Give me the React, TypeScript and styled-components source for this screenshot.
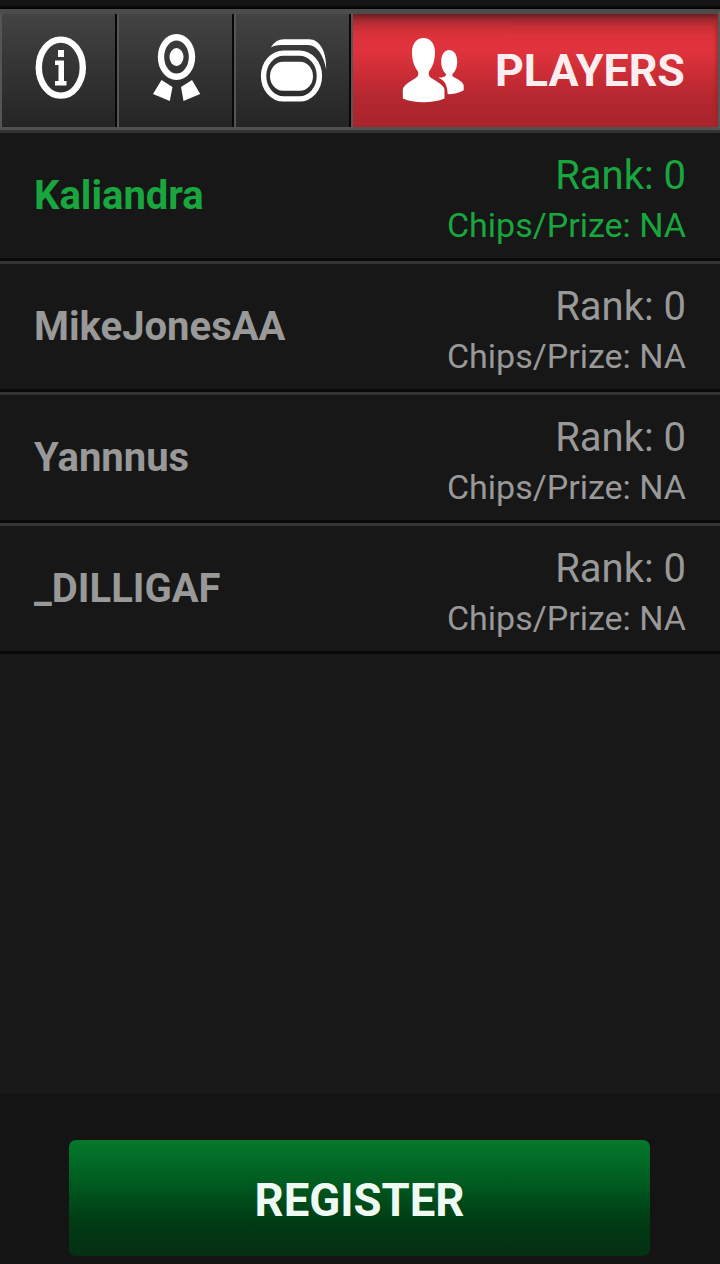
import React from "react";
import styled, { createGlobalStyle } from "styled-components";

const GlobalStyle = createGlobalStyle`
  *, *::before, *::after { box-sizing: border-box; }
  body {
    margin: 0;
    background: #191919;
    font-family: Roboto, "Liberation Sans", sans-serif;
  }
`;

const Screen = styled.main`
  display: flex;
  flex-direction: column;
  width: 720px;
  height: 1264px;
  overflow: hidden;
  background: #191919;
`;

const TopStrip = styled.div`
  flex: none;
  height: 9px;
  background: linear-gradient(#151515 0 5px, #030303 8px);
`;

const TabBar = styled.nav`
  flex: none;
  display: flex;
  height: 121px;
  border-top: 5px solid #4d4b4b;
  border-bottom: 3px solid #525050;
  border-right: 2px solid #595656;
`;

const Tab = styled.button<{ $active?: boolean }>`
  flex: ${(p) => (p.$active ? "1" : "0 0 117px")};
  display: flex;
  align-items: flex-start;
  height: 113px;
  margin: 0;
  padding: 0;
  border: 0 solid #070707;
  border-right-width: ${(p) => (p.$active ? 0 : 2)}px;
  box-shadow: ${(p) => (p.$active ? "inset 2px 0 #5b5555, inset -4px 0 4px -3px #8d242a" : "inset 2px 0 #555")};
  background: ${(p) =>
    p.$active
      ? "linear-gradient(#681d21 0, #a3282e 6px, #c92e36 13px, #dc323b 22px, #e1333d 36px, #cd2d36 58px, #b4272f 84px, #a8242c 100%)"
      : "linear-gradient(#434343, #353535 45%, #252525)"};
  color: #ffeef0;
  font: inherit;
`;

const TabIcon = styled.svg`
  flex: none;
  display: block;
  width: 115px;
  height: 113px;
  fill: #fff;
`;

const TabLabel = styled.span`
  margin-left: 29px;
  font-size: 44.8px;
  font-weight: 700;
  line-height: 52px;
  padding-top: 31px;
`;

const List = styled.ul`
  flex: 1;
  margin: 0;
  padding: 0;
  list-style: none;
`;

const Row = styled.li<{ $self?: boolean }>`
  display: flex;
  justify-content: space-between;
  height: 131px;
  padding: 0 34px;
  border-top: 3px solid #333;
  border-bottom: 3px solid #090909;
  background: #171717;
  color: ${(p) => (p.$self ? "#19a63f" : "#999")};
`;

const Name = styled.span`
  padding-top: 39px;
  font-size: 40px;
  font-weight: 700;
  line-height: 48px;
`;

const Stats = styled.div`
  display: flex;
  flex-direction: column;
  align-items: flex-end;
  padding-top: 19px;
`;

const Rank = styled.span`
  font-size: 40px;
  line-height: 48px;
`;

const Prize = styled.span`
  padding-top: 5px;
  font-size: 34px;
  line-height: 40px;
`;

const Footer = styled.footer`
  flex: none;
  display: flex;
  justify-content: center;
  height: 170px;
  padding: 46px 70px 0 69px;
  background: #141414;
`;

const RegisterButton = styled.button`
  width: 581px;
  height: 116px;
  padding: 6px 0 0;
  border: 0;
  border-radius: 7px;
  background: linear-gradient(#0a772b 0, #027329 9px, #005b20 43px, #003c14 80px, #052f13 100%);
  color: #effbf2;
  font: 700 45.5px/52px Roboto, "Liberation Sans", sans-serif;
`;

const InfoIcon = () => (
  <TabIcon viewBox="0 14 115 113">
    <ellipse cx="60.8" cy="67.6" rx="22" ry="28" fill="none" stroke="#fff" strokeWidth="6.4" />
    <path d="M58 50h6v7h-6zM55 60.5h9V81h2.5v4.5H55V81h3.5V65H55z" />
  </TabIcon>
);

const MedalIcon = () => (
  <TabIcon viewBox="117 14 115 113">
    <ellipse cx="176.5" cy="57" rx="15.5" ry="19.8" fill="none" stroke="#fff" strokeWidth="6.4" />
    <ellipse cx="176.5" cy="57" rx="7" ry="9" />
    <path d="M161.5 80l11 7-2.700 14-16.800-7zM192 80l-11 7 2.500 14 16.700-7z" />
  </TabIcon>
);

const TablesIcon = () => (
  <TabIcon viewBox="234 14 115 113">
    <rect x="270" y="61.8" width="43" height="29" rx="13" ry="14.5" />
    <rect x="263.6" y="53.1" width="55.8" height="45.8" rx="20" ry="22.9" fill="none" stroke="#fff" strokeWidth="5.4" />
    <path d="M270.800 47.500Q275.500 39.200 284 39.200H309C320 39.200 326.800 52 326.200 69.500C323.500 55 317 45 308 45H281Q274.500 45 270.800 47.500z" />
  </TabIcon>
);

const PlayersIcon = () => (
  <TabIcon viewBox="351 14 115 113">
    <path d="M423.5 38C416.500 38 412 44 412 52C412 61 414.500 67 418 71.500C419.200 76 417 77.500 412.500 79.900C407 83 402.800 86.500 402.800 90V98.500C414 103.600 433 103.600 444.500 98.500V90C444.500 86.500 440 83 434.500 79.900C430 77.500 427.800 76 429 71.500C432.500 67 435 61 435 52C435 44 430.500 38 423.500 38z" />
    <path d="M449.200 50C444.200 50 441.200 55 441.200 61.500C441.200 68.500 443.800 71.500 446.200 74.500C445.900 76.600 443 77.500 438.300 77.700C444.500 80.200 447.300 84.500 447.700 94.300C453.500 94.300 459.500 93 463.700 90.300V86C463.700 83 459.700 80.500 456.500 78.600C453.300 77 452.100 76.200 452.300 74.500C454.800 71.500 457.200 68.500 457.200 61.500C457.200 55 454.200 50 449.200 50z" />
  </TabIcon>
);

const players = [
  { name: "Kaliandra", self: true },
  { name: "MikeJonesAA" },
  { name: "Yannnus" },
  { name: "_DILLIGAF" },
];

export default function App() {
  return (
    <>
      <GlobalStyle />
      <Screen>
        <TopStrip />
        <TabBar>
          <Tab aria-label="Info"><InfoIcon /></Tab>
          <Tab aria-label="Prizes"><MedalIcon /></Tab>
          <Tab aria-label="Tables"><TablesIcon /></Tab>
          <Tab $active>
            <PlayersIcon />
            <TabLabel>PLAYERS</TabLabel>
          </Tab>
        </TabBar>
        <List>
          {players.map((p) => (
            <Row key={p.name} $self={p.self}>
              <Name>{p.name}</Name>
              <Stats>
                <Rank>Rank: 0</Rank>
                <Prize>Chips/Prize: NA</Prize>
              </Stats>
            </Row>
          ))}
        </List>
        <Footer>
          <RegisterButton>REGISTER</RegisterButton>
        </Footer>
      </Screen>
    </>
  );
}
